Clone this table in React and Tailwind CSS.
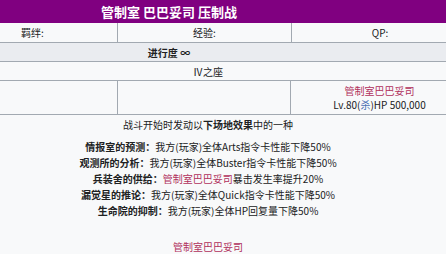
import React from 'react';

const effects = [
  { name: '情报室的预测', text: '我方(玩家)全体Arts指令卡性能下降50%' },
  { name: '观测所的分析', text: '我方(玩家)全体Buster指令卡性能下降50%' },
  { name: '兵装舍的供给', servant: '管制室巴巴妥司', text: '暴击发生率提升20%' },
  { name: '漏觉星的推论', text: '我方(玩家)全体Quick指令卡性能下降50%' },
  { name: '生命院的抑制', text: '我方(玩家)全体HP回复量下降50%' },
];

const App = () => {
  return (
    <div className="w-[446px] h-[254px] overflow-hidden bg-[#f8f9fa] text-[10px] text-[#202122] font-['Noto_Sans_CJK_SC','Noto_Sans',sans-serif]">
      <div className="w-[520px] -ml-[52px]">
        {/* Header */}
        <div className="h-[23px] bg-[#800080] text-white font-bold text-[13px] flex items-center justify-center pr-[78px]">
          管制室 巴巴妥司 压制战
        </div>

        {/* Rewards row */}
        <div className="grid grid-cols-[170px_174px_176px] h-[20px] border-b border-[#a2a9b1]">
          <div className="flex items-center justify-center border-r border-[#a2a9b1]">羁绊:</div>
          <div className="flex items-center justify-center border-r border-[#a2a9b1]">经验:</div>
          <div className="flex items-center justify-center">QP:</div>
        </div>

        {/* Progress */}
        <div className="h-[19px] bg-[#eaecf0] border-b border-[#a2a9b1] flex items-center justify-center font-bold pr-[78px]">
          进行度 ∞
        </div>

        {/* Location */}
        <div className="h-[19px] border-b border-[#a2a9b1] flex items-center justify-center">
          Ⅳ之座
        </div>

        {/* Enemy row */}
        <div className="grid grid-cols-[170px_173px_177px] h-[34px] border-b border-[#a2a9b1]">
          <div className="border-r border-[#a2a9b1]"></div>
          <div className="border-r border-[#a2a9b1]"></div>
          <div className="flex flex-col items-center justify-center leading-[14px]">
            <span className="text-[#b0305c]">管制室巴巴妥司</span>
            <span>
              Lv.80(<span className="text-[#4a6fb5]">杀</span>)HP 500,000
            </span>
          </div>
        </div>

        {/* Field effects */}
        <div className="flex flex-col items-center pt-[2px] leading-[16px]">
          <div>
            战斗开始时发动以<b>下场地效果</b>中的一种
          </div>
          <div className="mt-[6px] flex flex-col items-center">
            {effects.map((e) => (
              <div key={e.name}>
                <b>{e.name}：</b>
                {e.servant && <span className="text-[#b0305c]">{e.servant}</span>}
                {e.text}
              </div>
            ))}
          </div>
          <div className="mt-[20px] text-[#b0305c]">管制室巴巴妥司</div>
        </div>
      </div>
    </div>
  );
};

export default App;
